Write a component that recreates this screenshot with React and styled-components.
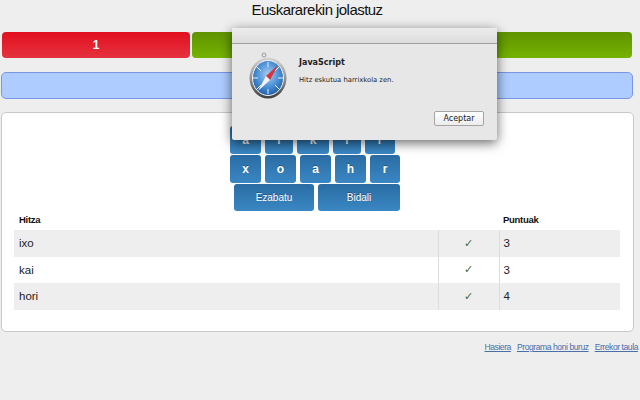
import React from "react";
import styled, { createGlobalStyle } from "styled-components";

const GlobalStyle = createGlobalStyle`
  html, body {
    margin: 0;
    padding: 0;
    height: 100%;
    overflow: hidden;
    background: #eeeeee;
    font-family: "Liberation Sans", Arial, sans-serif;
  }
`;

const Page = styled.div`
  position: relative;
  width: 640px;
  height: 400px;
  overflow: hidden;
`;

const Title = styled.h1`
  margin: 0;
  height: 32px;
  padding-right: 6px;
  font-size: 15px;
  line-height: 19px;
  letter-spacing: -0.55px;
  font-weight: 400;
  text-align: center;
  color: #111;
`;

const Scores = styled.div`
  display: grid;
  grid-template-columns: 188px 440px;
  gap: 2px;
  margin-left: 2px;
`;

const Score = styled.div`
  height: 26px;
  border-radius: 4px;
  line-height: 26px;
  text-align: center;
  font-size: 12px;
  font-weight: 700;
  color: #fff;
  background: ${(p) =>
    p.$green
      ? "linear-gradient(#5f9300, #75b300)"
      : "linear-gradient(#e2101f, #e5323f)"};
`;

const Message = styled.div`
  box-sizing: border-box;
  height: 27px;
  margin: 14px 7px 0 1px;
  border: 1px solid #7a97e6;
  border-radius: 5px;
  background: #aeccff;
`;

const Panel = styled.div`
  box-sizing: border-box;
  height: 220px;
  margin: 13px 6px 0 1px;
  padding: 13px 12px 0;
  background: #fff;
  border: 1px solid #c8c8c8;
  border-radius: 5px;
`;

const Keyboard = styled.div`
  display: flex;
  flex-direction: column;
  align-items: flex-start;
  gap: 1px;
  width: 171px;
  margin-left: 216px;
`;

const KeyRow = styled.div`
  display: flex;
  gap: ${(p) => p.$gap || 4}px;
  margin-left: ${(p) => p.$indent || 0}px;
`;

const Key = styled.button`
  box-sizing: border-box;
  width: ${(p) => p.$w || 31}px;
  height: ${(p) => p.$h || 28}px;
  padding: 0;
  border: 0;
  border-radius: 3px;
  background: linear-gradient(#2a6ca3, #3a87c4);
  color: #fff;
  font-family: inherit;
  font-size: ${(p) => p.$size || 12}px;
  font-weight: ${(p) => (p.$normal ? 400 : 700)};
  text-shadow: 0 -1px 0 rgba(0, 0, 0, 0.3);
`;

const Table = styled.table`
  width: 606px;
  margin-top: 1px;
  border-collapse: collapse;
  table-layout: fixed;
  font-size: 11px;
  color: #222;
`;

const Head = styled.th`
  height: 16px;
  padding: 2px 4px 0;
  vertical-align: top;
  text-align: left;
  font-size: 9.5px;
  letter-spacing: -0.3px;
  color: #111;
  &:first-child {
    padding-left: 5px;
  }
`;

const Row = styled.tr`
  height: 26.6px;
  background: ${(p) => (p.$odd ? "#eeeeee" : "#fff")};
`;

const Cell = styled.td`
  padding: 0 4px;
  font-size: 11.5px;
  border-left: ${(p) => (p.$line ? "1px solid #dddddd" : "0")};
  &:first-child {
    padding-left: 5px;
  }
`;

const Check = styled(Cell)`
  text-align: center;
  font-family: "DejaVu Sans", sans-serif;
  font-size: 11px;
  color: #3f6b3f;
`;

const Links = styled.nav`
  display: flex;
  justify-content: flex-end;
  gap: 6px;
  margin: 9px 2px 0 0;
`;

const Link = styled.a`
  font-size: 8.6px;
  line-height: 12px;
  letter-spacing: -0.45px;
  color: #4a6fa8;
  text-decoration: underline;
`;

const Dialog = styled.div`
  position: absolute;
  top: 28px;
  left: 232px;
  box-sizing: border-box;
  width: 265px;
  height: 112px;
  background: #e7e7e7;
  border-radius: 2px;
  box-shadow: 0 3px 12px rgba(0, 0, 0, 0.6);
  font-family: "DejaVu Sans", sans-serif;
  color: #222;
`;

const DialogBar = styled.div`
  height: 15px;
  background: linear-gradient(#ececec, #dcdcdc);
  border-bottom: 1px solid #9f9f9f;
`;

const DialogBody = styled.div`
  display: flex;
  gap: 11px;
  padding: 8px 13px 0 17px;
`;

const DialogText = styled.div`
  flex: 1;
  padding-top: 6px;
`;

const DialogTitle = styled.div`
  font-size: 8px;
  line-height: 10px;
  font-weight: 700;
`;

const DialogMessage = styled.div`
  margin-top: 8px;
  font-size: 6.8px;
  line-height: 9px;
`;

const DialogActions = styled.div`
  display: flex;
  justify-content: flex-end;
  margin-top: 26px;
`;

const DialogButton = styled.button`
  box-sizing: border-box;
  width: 50px;
  height: 15px;
  padding: 0;
  background: linear-gradient(#ffffff, #ececec);
  border: 1px solid #a5a5a5;
  border-radius: 2px;
  font-family: inherit;
  font-size: 8px;
  color: #222;
`;

const Icon = styled.svg`
  flex-shrink: 0;
`;

const SafariIcon = () => (
  <Icon width="39" height="47" viewBox="0 0 39 47">
    <defs>
      <radialGradient id="dial" cx="50%" cy="40%" r="60%">
        <stop offset="0" stopColor="#a9cdf2" />
        <stop offset="0.6" stopColor="#4a8fd6" />
        <stop offset="1" stopColor="#1f5ea8" />
      </radialGradient>
      <linearGradient id="rim" x1="0" y1="0" x2="0" y2="1">
        <stop offset="0" stopColor="#d6d6d6" />
        <stop offset="0.55" stopColor="#8d8d8d" />
        <stop offset="1" stopColor="#3d3d3d" />
      </linearGradient>
    </defs>
    <circle cx="15" cy="3" r="2" fill="none" stroke="#9a9a9a" strokeWidth="1" />
    <ellipse cx="19" cy="26" rx="18.5" ry="20.5" fill="url(#rim)" />
    <ellipse cx="19" cy="26" rx="15.5" ry="17.5" fill="url(#dial)" stroke="#f2f2f2" strokeWidth="1" />
    <path d="M19 10v5M19 37v5M4 26h5M29 26h5M8 15l4 4M30 37l-4-4M30 15l-4 4M8 37l4-4" stroke="#e8f2fb" strokeWidth="1" />
    <path d="M29 13L17 24l4 4z" fill="#d8353a" />
    <path d="M9 39l12-11-4-4z" fill="#f4f4f4" />
  </Icon>
);

const words = [
  { word: "ixo", points: 3 },
  { word: "kai", points: 3 },
  { word: "hori", points: 4 },
];

const App = () => {
  return (
    <Page>
      <GlobalStyle />
      <Title>Euskararekin jolastuz</Title>
      <Scores>
        <Score>1</Score>
        <Score $green />
      </Scores>
      <Message />
      <Panel>
        <Keyboard>
          <KeyRow>
            <Key>a</Key>
            <Key $w={28}>i</Key>
            <Key $w={32}>k</Key>
            <Key $w={28}>i</Key>
            <Key $w={30}>r</Key>
          </KeyRow>
          <KeyRow>
            <Key>x</Key>
            <Key>o</Key>
            <Key>a</Key>
            <Key>h</Key>
            <Key $w={30}>r</Key>
          </KeyRow>
          <KeyRow $indent={4} $gap={4}>
            <Key $w={80} $h={27} $size={10} $normal>Ezabatu</Key>
            <Key $w={82} $h={27} $size={10} $normal>Bidali</Key>
          </KeyRow>
        </Keyboard>
        <Table>
          <colgroup>
            <col width="424" />
            <col width="61" />
            <col />
          </colgroup>
          <thead>
            <tr>
              <Head>Hitza</Head>
              <Head />
              <Head>Puntuak</Head>
            </tr>
          </thead>
          <tbody>
            {words.map((w, i) => (
              <Row key={w.word} $odd={i % 2 === 0}>
                <Cell>{w.word}</Cell>
                <Check $line>✓</Check>
                <Cell $line>{w.points}</Cell>
              </Row>
            ))}
          </tbody>
        </Table>
      </Panel>
      <Links>
        <Link>Hasiera</Link>
        <Link>Programa honi buruz</Link>
        <Link>Errekor taula</Link>
      </Links>
      <Dialog>
        <DialogBar />
        <DialogBody>
          <SafariIcon />
          <DialogText>
            <DialogTitle>JavaScript</DialogTitle>
            <DialogMessage>Hitz eskutua harrixkola zen.</DialogMessage>
            <DialogActions>
              <DialogButton>Aceptar</DialogButton>
            </DialogActions>
          </DialogText>
        </DialogBody>
      </Dialog>
    </Page>
  );
};

export default App;
